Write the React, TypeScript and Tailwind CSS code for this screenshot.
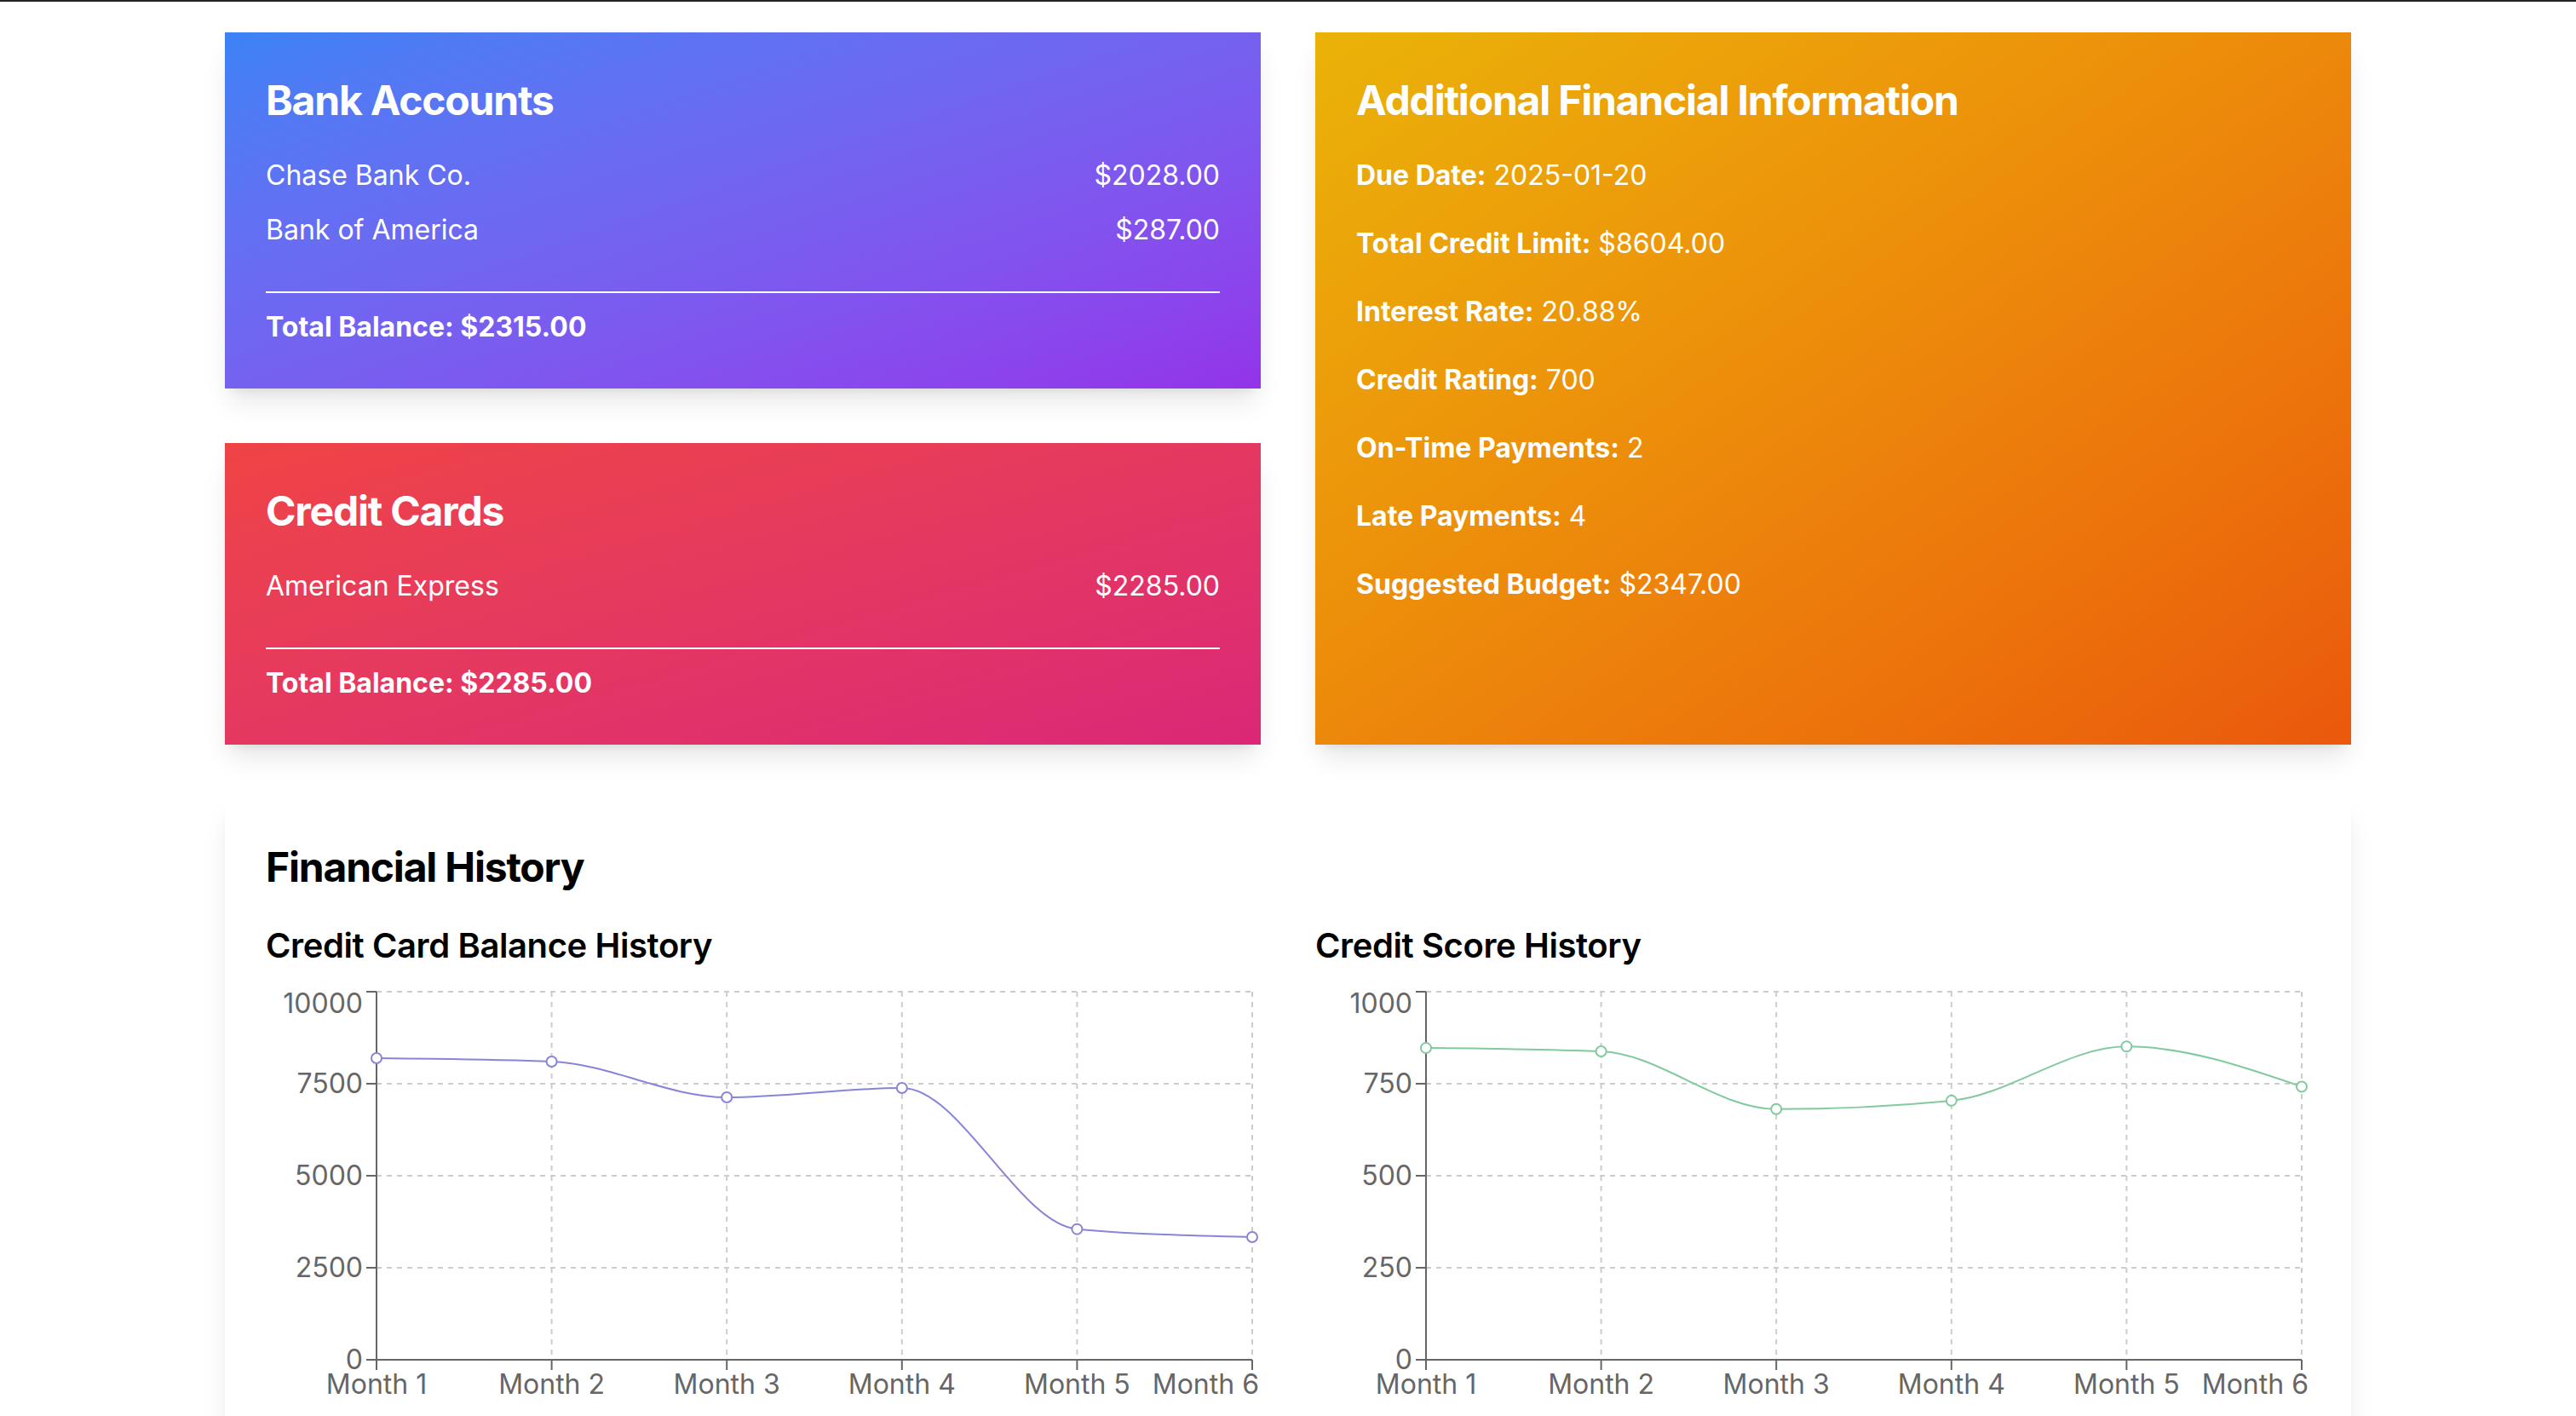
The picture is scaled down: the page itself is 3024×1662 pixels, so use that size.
import React from "react"

type Point = { x: number; y: number }

type AccountRow = { name: string; amount: number }

const MONTHS = ["Month 1", "Month 2", "Month 3", "Month 4", "Month 5", "Month 6"]

const bankAccounts: AccountRow[] = [
    { name: "Chase Bank Co.", amount: 2028 },
    { name: "Bank of America", amount: 287 },
]

const creditCards: AccountRow[] = [{ name: "American Express", amount: 2285 }]

const extraInfo = [
    { label: "Due Date:", value: "2025-01-20" },
    { label: "Total Credit Limit:", value: "$8604.00" },
    { label: "Interest Rate:", value: "20.88%" },
    { label: "Credit Rating:", value: "700" },
    { label: "On-Time Payments:", value: "2" },
    { label: "Late Payments:", value: "4" },
    { label: "Suggested Budget:", value: "$2347.00" },
]

const balanceHistory = [8194, 8102, 7130, 7384, 3550, 3333]
const scoreHistory = [847, 838, 681, 704, 851, 742]

const W = 1168
const H = 560
const LEFT = 130
const RIGHT = 1158
const TOP = 10
const BOTTOM = 442

const money = (n: number) => `$${n.toFixed(2)}`

// same maths as d3's curveMonotoneX, which is what the line charts use
function monotonePath(pts: Point[]) {
    const n = pts.length
    const s: number[] = []
    for (let i = 0; i < n - 1; i++) s.push((pts[i + 1].y - pts[i].y) / (pts[i + 1].x - pts[i].x))
    const m: number[] = new Array(n).fill(0)
    for (let i = 1; i < n - 1; i++) {
        const h0 = pts[i].x - pts[i - 1].x
        const h1 = pts[i + 1].x - pts[i].x
        const p = (s[i - 1] * h1 + s[i] * h0) / (h0 + h1)
        m[i] = (Math.sign(s[i - 1]) + Math.sign(s[i])) * Math.min(Math.abs(s[i - 1]), Math.abs(s[i]), 0.5 * Math.abs(p)) || 0
    }
    m[0] = (3 * s[0] - m[1]) / 2
    m[n - 1] = (3 * s[n - 2] - m[n - 2]) / 2
    let d = `M${pts[0].x},${pts[0].y}`
    for (let i = 0; i < n - 1; i++) {
        const dx = (pts[i + 1].x - pts[i].x) / 3
        d += `C${pts[i].x + dx},${pts[i].y + dx * m[i]},${pts[i + 1].x - dx},${pts[i + 1].y - dx * m[i + 1]},${pts[i + 1].x},${pts[i + 1].y}`
    }
    return d
}

function HistoryChart({ values, ticks, color }: { values: number[]; ticks: number[]; color: string }) {
    const max = ticks[ticks.length - 1]
    const xs = values.map((_, i) => LEFT + (i * (RIGHT - LEFT)) / (values.length - 1))
    const toY = (v: number) => BOTTOM - (v / max) * (BOTTOM - TOP)
    const pts = values.map((v, i) => ({ x: xs[i], y: toY(v) }))

    return (
        <svg width={W} height={H} className="block">
            {/* grid */}
            <g stroke="#ccc" strokeWidth={2} strokeDasharray="6 6" fill="none">
                {ticks.map((t) => (
                    <line key={t} x1={LEFT} x2={RIGHT} y1={toY(t)} y2={toY(t)} />
                ))}
                {xs.map((x) => (
                    <line key={x} x1={x} x2={x} y1={TOP} y2={BOTTOM} />
                ))}
            </g>

            {/* y axis */}
            <line x1={LEFT} x2={LEFT} y1={TOP} y2={BOTTOM} stroke="#666" strokeWidth={2} />
            {ticks.map((t) => (
                <g key={t}>
                    <line x1={LEFT - 12} x2={LEFT} y1={toY(t)} y2={toY(t)} stroke="#666" strokeWidth={2} />
                    <text x={LEFT - 16} y={t === max ? toY(t) + 25 : toY(t) + 11} textAnchor="end" fill="#666" fontSize={32}>
                        {t}
                    </text>
                </g>
            ))}

            {/* x axis */}
            <line x1={LEFT} x2={RIGHT} y1={BOTTOM} y2={BOTTOM} stroke="#666" strokeWidth={2} />
            {xs.map((x, i) => (
                <g key={x}>
                    <line x1={x} x2={x} y1={BOTTOM} y2={BOTTOM + 12} stroke="#666" strokeWidth={2} />
                    <text
                        x={i === xs.length - 1 ? W - 2 : x}
                        y={BOTTOM + 40}
                        textAnchor={i === xs.length - 1 ? "end" : "middle"}
                        fill="#666"
                        fontSize={32}
                    >
                        {MONTHS[i]}
                    </text>
                </g>
            ))}

            {/* data */}
            <path d={monotonePath(pts)} fill="none" stroke={color} strokeWidth={2} />
            {pts.map((p) => (
                <circle key={p.x} cx={p.x} cy={p.y} r={6} fill="#fff" stroke={color} strokeWidth={2} />
            ))}
        </svg>
    )
}

const CARD_SHADOW = "shadow-[0_20px_30px_-6px_rgba(0,0,0,0.1),0_8px_12px_-8px_rgba(0,0,0,0.1)]"

function AccountCard({ title, rows, gradient }: { title: string; rows: AccountRow[]; gradient: string }) {
    const total = rows.reduce((sum, r) => sum + r.amount, 0)
    return (
        <div className={`${gradient} ${CARD_SHADOW} p-12 text-white`}>
            <h2 className="mb-8 text-[48px] leading-[64px] font-bold tracking-[-0.025em]">{title}</h2>
            <div className="flex flex-col gap-4">
                {rows.map((r) => (
                    <div key={r.name} className="flex justify-between text-[32px] leading-[48px]">
                        <span>{r.name}</span>
                        <span>{money(r.amount)}</span>
                    </div>
                ))}
            </div>
            <div className="mt-12 border-t-2 border-white pt-4 text-[32px] leading-[48px] font-bold">
                Total Balance: {money(total)}
            </div>
        </div>
    )
}

export default function App() {
    return (
        <div className="h-screen overflow-hidden border-t-2 border-[#222] bg-white font-[Inter,sans-serif] text-black">
            <div className="mx-auto max-w-[2560px] px-8 pt-9">
                <div className="grid grid-cols-2 gap-16">
                    {/* left column: accounts + cards */}
                    <div className="flex flex-col gap-16">
                        <AccountCard title="Bank Accounts" rows={bankAccounts} gradient="bg-gradient-to-br from-[#3b82f6] to-[#9333ea]" />
                        <AccountCard title="Credit Cards" rows={creditCards} gradient="bg-gradient-to-br from-[#ef4444] to-[#db2777]" />
                    </div>

                    {/* right column */}
                    <div className={`bg-gradient-to-br from-[#eab308] to-[#ea580c] ${CARD_SHADOW} p-12 text-white`}>
                        <h2 className="mb-8 text-[48px] leading-[64px] font-bold tracking-[-0.025em]">Additional Financial Information</h2>
                        <div className="flex flex-col gap-8">
                            {extraInfo.map((item) => (
                                <p key={item.label} className="text-[32px] leading-[48px]">
                                    <span className="font-bold">{item.label}</span> {item.value}
                                </p>
                            ))}
                        </div>
                    </div>
                </div>

                <div className={`mt-16 bg-white p-12 ${CARD_SHADOW}`}>
                    <h2 className="mb-8 text-[48px] leading-[64px] font-bold tracking-[-0.025em]">Financial History</h2>
                    <div className="grid grid-cols-2 gap-16">
                        <div>
                            <h3 className="mb-4 text-[40px] leading-[56px] font-semibold tracking-[-0.01em]">Credit Card Balance History</h3>
                            <HistoryChart values={balanceHistory} ticks={[0, 2500, 5000, 7500, 10000]} color="#8884d8" />
                        </div>
                        <div>
                            <h3 className="mb-4 text-[40px] leading-[56px] font-semibold tracking-[-0.01em]">Credit Score History</h3>
                            <HistoryChart values={scoreHistory} ticks={[0, 250, 500, 750, 1000]} color="#82ca9d" />
                        </div>
                    </div>
                </div>
            </div>
        </div>
    )
}
